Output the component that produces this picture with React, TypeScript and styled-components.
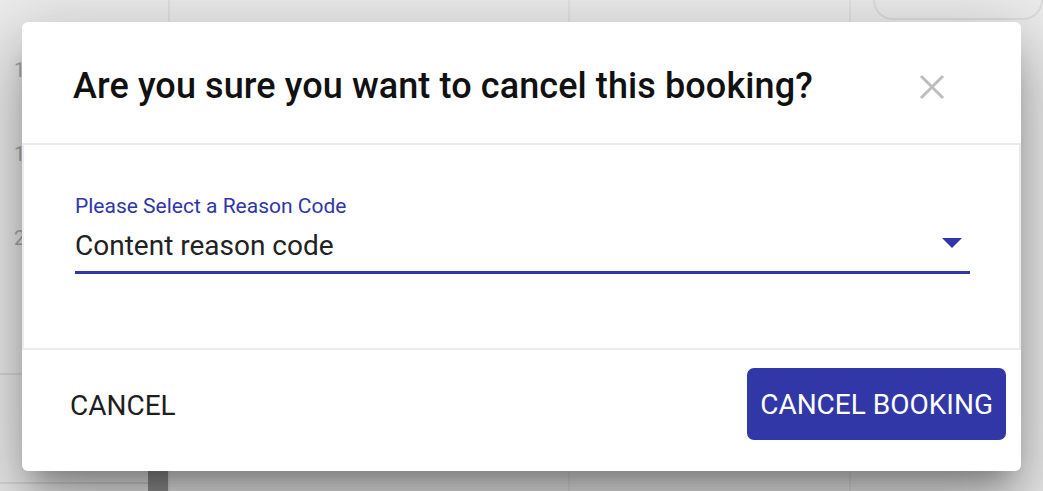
import React from 'react'
import styled, { createGlobalStyle } from 'styled-components'

const GlobalStyle = createGlobalStyle`
    html, body {
        margin: 0;
        padding: 0;
        width: 100%;
        height: 100%;
        overflow: hidden;
        font-family: Roboto, "Liberation Sans", Arial, sans-serif;
    }
    #root {
        height: 100%;
    }
`
const Page = styled.div`
    width: 1043px;
    height: 491px;
    position: relative;
    background-color: #ededed;
    display: flex;
    flex-direction: row;
    overflow: hidden;
`
const TimeColumn = styled.div`
    width: 148px;
    display: flex;
    flex-direction: column;
    padding-top: 58px;
    box-sizing: border-box;
`
const TimeLabel = styled.div`
    font-size: 20px;
    color: #8a8a8a;
    padding-left: 14px;
    height: 84px;
`
const HourLine = styled.div<{ $top: number }>`
    margin-top: ${p => p.$top}px;
    border-top: 2px solid #d2d2d2;
`
const Gutter = styled.div`
    width: 20px;
    display: flex;
    flex-direction: column;
    justify-content: flex-end;
    border-right: 2px solid #dcdcdc;
`
const ScrollThumb = styled.div`
    height: 22px;
    background: #6c6c6c;
`
const DayColumn = styled.div<{ $w: number }>`
    width: ${p => p.$w}px;
    border-right: 2px solid #dedede;
    box-sizing: border-box;
`
const LastColumn = styled.div`
    flex: 1;
    padding: 0 0 0 22px;
`
const EventCard = styled.div`
    height: 18px;
    border: 2px solid #d6d6d6;
    border-top: none;
    border-radius: 0 0 24px 24px;
`
const Backdrop = styled.div`
    position: absolute;
    inset: 0;
    display: flex;
    padding: 22px;
    box-sizing: border-box;
    background: rgba(240, 240, 240, 0.3);
`
const Dialog = styled.div`
    width: 999px;
    height: 449px;
    background: #fff;
    border-radius: 6px;
    display: flex;
    flex-direction: column;
    box-shadow: 0 19px 26px -12px rgba(0, 0, 0, 0.3), 0 40px 66px 5px rgba(0, 0, 0, 0.2), 0 16px 80px 14px rgba(0, 0, 0, 0.14);
`
const Header = styled.div`
    height: 121px;
    display: flex;
    align-items: center;
    justify-content: space-between;
    padding: 0 76px 0 51px;
    flex-shrink: 0;
`
const Title = styled.h2`
    margin: 0;
    font-size: 36px;
    font-weight: 500;
    color: #111;
    letter-spacing: 0.1px;
    margin-top: 6px;
`
const CloseButton = styled.button`
    border: none;
    background: none;
    padding: 0;
    width: 26px;
    height: 26px;
    margin-top: 8px;
    cursor: pointer;
    display: flex;
`
const Content = styled.div`
    border: 2px solid #ebebeb;
    padding: 51px 49px 74px 51px;
    flex-shrink: 0;
`
const Field = styled.div`
    display: flex;
    flex-direction: column;
`
const Label = styled.label`
    font-size: 21px;
    line-height: 1;
    color: #3036a8;
    margin-bottom: 12px;
`
const SelectRow = styled.div`
    display: flex;
    align-items: center;
    justify-content: space-between;
    border-bottom: 3.5px solid #3036a8;
    padding-bottom: 8px;
`
const Value = styled.div`
    font-size: 28px;
    line-height: 1.2;
    color: #222;
`
const Arrow = styled.svg`
    width: 20px;
    height: 10px;
    margin-right: 8px;
    margin-top: -6px;
`
const Footer = styled.div`
    flex: 1;
    display: flex;
    align-items: flex-start;
    justify-content: space-between;
    padding: 18px 15px 0 22px;
`
const TextButton = styled.button`
    border: none;
    background: none;
    font-family: inherit;
    font-size: 28px;
    font-weight: 400;
    color: #1e1e1e;
    text-transform: uppercase;
    height: 72px;
    padding: 4px 26px 0;
    cursor: pointer;
`
const PrimaryButton = styled.button`
    border: none;
    background: #3137a7;
    color: #fff;
    font-family: inherit;
    font-size: 28px;
    font-weight: 400;
    text-transform: uppercase;
    height: 72px;
    padding: 2px 13px 0;
    border-radius: 7px;
    cursor: pointer;
`

const App = () => {
    return (
        <>
            <GlobalStyle />
            <Page>
                <TimeColumn>
                    <TimeLabel>1</TimeLabel>
                    <TimeLabel>1</TimeLabel>
                    <TimeLabel>2</TimeLabel>
                    <HourLine $top={63} />
                    <HourLine $top={107} />
                </TimeColumn>
                <Gutter>
                    <ScrollThumb />
                </Gutter>
                <DayColumn $w={400} />
                <DayColumn $w={281} />
                <LastColumn>
                    <EventCard />
                </LastColumn>
                <Backdrop>
                    <Dialog role="dialog">
                        <Header>
                            <Title>Are you sure you want to cancel this booking?</Title>
                            <CloseButton aria-label="close">
                                <svg width="26" height="26" viewBox="0 0 26 26">
                                    <path d="M2 2 L24 24 M24 2 L2 24" stroke="#bdbdbd" strokeWidth="3" fill="none" />
                                </svg>
                            </CloseButton>
                        </Header>
                        <Content>
                            <Field>
                                <Label>Please Select a Reason Code</Label>
                                <SelectRow>
                                    <Value>Content reason code</Value>
                                    <Arrow viewBox="0 0 20 10">
                                        <path d="M0 0 L20 0 L10 10 Z" fill="#3036a8" />
                                    </Arrow>
                                </SelectRow>
                            </Field>
                        </Content>
                        <Footer>
                            <TextButton>Cancel</TextButton>
                            <PrimaryButton>Cancel Booking</PrimaryButton>
                        </Footer>
                    </Dialog>
                </Backdrop>
            </Page>
        </>
    )
}

export default App
